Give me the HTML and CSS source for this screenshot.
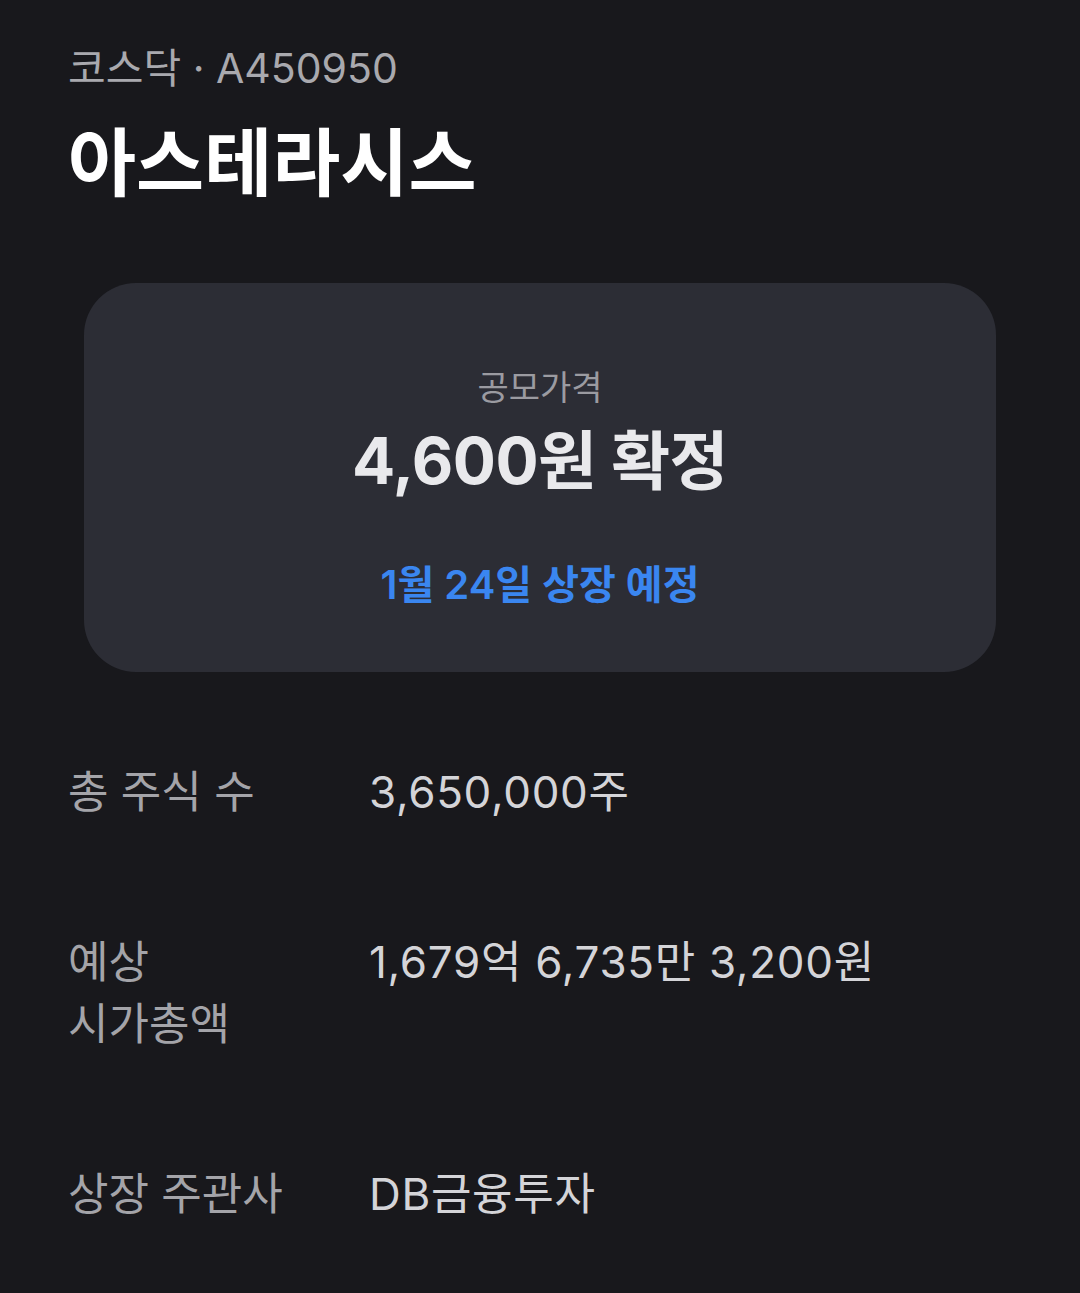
FILE: index.html
```html
<!DOCTYPE html>
<html lang="ko">
<head>
<meta charset="utf-8">
<link rel="stylesheet" href="styles.css">
</head>
<body>
<main class="page">
  <header class="head">
    <div class="market">코스닥 · A450950</div>
    <h1 class="name">아스테라시스</h1>
  </header>
  <section class="card">
    <div class="card-label">공모가격</div>
    <div class="card-price">4,600원 확정</div>
    <div class="card-date">1월 24일 상장 예정</div>
  </section>
  <section class="info">
    <div class="row">
      <div class="label">총 주식 수</div>
      <div class="value">3,650,000주</div>
    </div>
    <div class="row">
      <div class="label">예상 시가총액</div>
      <div class="value">1,679억 6,735만 3,200원</div>
    </div>
    <div class="row">
      <div class="label">상장 주관사</div>
      <div class="value">DB금융투자</div>
    </div>
  </section>
</main>
</body>
</html>
```
FILE: styles.css
```css
* { box-sizing: border-box; }
html, body {
  margin: 0;
  padding: 0;
  background: #18181c;
}
body {
  font-family: Inter, "Noto Sans CJK KR", sans-serif;
  color: #e6e6e9;
  height: 1293px;
  overflow: hidden;
  word-break: keep-all;
}
.page {
  padding: 42px 0 0;
}
.head {
  padding: 0 68px;
}
.market {
  font-size: 41px;
  line-height: 52px;
  color: #a9a9ae;
}
.name {
  margin: 24px 0 0;
  font-size: 74px;
  line-height: 90px;
  font-weight: 700;
  color: #ffffff;
}
.card {
  margin: 75px 84px 0;
  background: #2c2d35;
  border-radius: 52px;
  padding: 84px 0 62px;
  display: flex;
  flex-direction: column;
  align-items: center;
}
.card-label {
  font-size: 34px;
  line-height: 42px;
  color: #9b9ba1;
}
.card-price {
  margin-top: 14px;
  font-size: 64px;
  line-height: 76px;
  font-weight: 700;
  color: #e9e9ec;
  letter-spacing: -0.5px;
}
.card-date {
  margin-top: 61px;
  font-size: 40px;
  line-height: 50px;
  font-weight: 600;
  color: #3a86f0;
}
.info {
  margin-top: 89px;
  padding: 0 68px;
  display: flex;
  flex-direction: column;
  gap: 108px;
}
.row {
  display: flex;
  align-items: flex-start;
  gap: 61px;
}
.label {
  width: 240px;
  flex: none;
  font-size: 44px;
  line-height: 62px;
  color: #a4a4a9;
}
.value {
  font-size: 44px;
  line-height: 62px;
  color: #d4d4d8;
  letter-spacing: 0.7px;
}
```
